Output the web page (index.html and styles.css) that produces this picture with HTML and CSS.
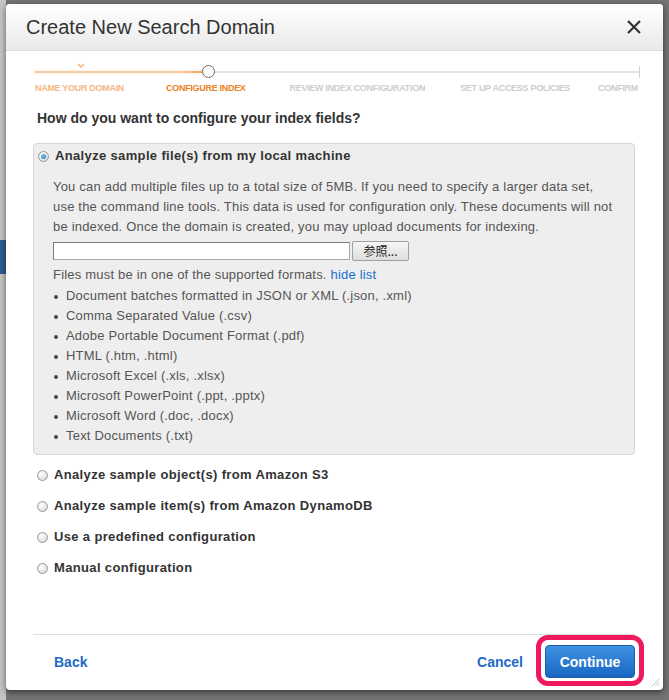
FILE: index.html
```html
<!DOCTYPE html>
<html lang="en">
<head>
    <meta charset="UTF-8">
    <title>Create New Search Domain</title>
    <link rel="stylesheet" href="styles.css">
</head>
<body>
    <div class="dialog">
        <div class="dialog-header">
            <h1>Create New Search Domain</h1>
            <svg class="close" width="14" height="14" viewBox="0 0 14 14"><path d="M1 1L13 13M13 1L1 13" stroke="#333" stroke-width="2.2"/></svg>
        </div>
        <div class="dialog-body">
            <div class="stepper">
                <div class="track">
                    <svg class="check" width="8" height="5" viewBox="0 0 8 5"><path d="M1 1L4 4L7 1" stroke="#f3ad72" stroke-width="1.4" fill="none"/></svg>
                    <div class="track-done"></div>
                    <div class="track-dot"></div>
                    <div class="track-end"></div>
                </div>
                <div class="steps">
                    <span class="step done s1">NAME YOUR DOMAIN</span>
                    <span class="step current s2">CONFIGURE INDEX</span>
                    <span class="step s3">REVIEW INDEX CONFIGURATION</span>
                    <span class="step s4">SET UP ACCESS POLICIES</span>
                    <span class="step s5">CONFIRM</span>
                </div>
            </div>

            <h2 class="question">How do you want to configure your index fields?</h2>

            <div class="panel">
                <div class="option"><span class="radio checked"></span>Analyze sample file(s) from my local machine</div>
                <p class="info">You can add multiple files up to a total size of 5MB. If you need to specify a larger data set,<br>use the command line tools. This data is used for configuration only. These documents will not<br>be indexed. Once the domain is created, you may upload documents for indexing.</p>
                <div class="file-row">
                    <div class="file-box"></div>
                    <div class="file-btn">参照...</div>
                </div>
                <p class="formats">Files must be in one of the supported formats. <a href="#">hide list</a></p>
                <ul class="format-list">
                    <li>Document batches formatted in JSON or XML (.json, .xml)</li>
                    <li>Comma Separated Value (.csv)</li>
                    <li>Adobe Portable Document Format (.pdf)</li>
                    <li>HTML (.htm, .html)</li>
                    <li>Microsoft Excel (.xls, .xlsx)</li>
                    <li>Microsoft PowerPoint (.ppt, .pptx)</li>
                    <li>Microsoft Word (.doc, .docx)</li>
                    <li>Text Documents (.txt)</li>
                </ul>
            </div>

            <div class="option outer"><span class="radio"></span>Analyze sample object(s) from Amazon S3</div>
            <div class="option outer"><span class="radio"></span>Analyze sample item(s) from Amazon DynamoDB</div>
            <div class="option outer"><span class="radio"></span>Use a predefined configuration</div>
            <div class="option outer"><span class="radio"></span>Manual configuration</div>
        </div>
        <div class="dialog-footer">
            <a href="#" class="link back">Back</a>
            <a href="#" class="link cancel">Cancel</a>
            <button class="continue">Continue</button>
        </div>
        <svg class="grip" width="9" height="9" viewBox="0 0 9 9"><path d="M8 1L1 8M8 4L4 8M8 7L7 8" stroke="#b5c4d6" stroke-width="1"/></svg>
    </div>
</body>
</html>
```

FILE: styles.css
```css
body {
    margin: 0;
    height: 700px;
    overflow: hidden;
    font-family: "Liberation Sans", Arial, sans-serif;
    background:
        linear-gradient(to bottom, transparent 240px, #2f5f93 240px, #2f5f93 274px, transparent 274px) left / 6px 100% no-repeat,
        linear-gradient(to right, #c4c4c4 6px, #747474 6px);
    padding-top: 4px;
    box-sizing: border-box;
}

.dialog {
    position: relative;
    margin-left: 6px;
    width: 657px;
    height: 686px;
    background-color: #fff;
    border-radius: 4px;
    box-shadow: 0 2px 6px rgba(0, 0, 0, 0.55);
    display: flex;
    flex-direction: column;
}

.dialog-header {
    height: 46px;
    padding: 0 22px 0 20px;
    display: flex;
    align-items: center;
    justify-content: space-between;
    background: linear-gradient(#ffffff, #e9e9e9);
    border-bottom: 1px solid #dcdcdc;
    border-radius: 4px 4px 0 0;
}

.dialog-header h1 {
    margin: 0;
    font-size: 20px;
    font-weight: normal;
    color: #333;
}

.dialog-body {
    flex: 1;
    padding: 0 28px 0 27px;
}

.stepper {
    margin: 0 -5px 0 2px;
    padding-top: 15px;
}

.track {
    position: relative;
    height: 12px;
}

.track::before {
    content: "";
    position: absolute;
    left: 0;
    right: 0;
    top: 5px;
    height: 2px;
    background-color: #e3e3e3;
}

.track-done {
    position: absolute;
    left: 0;
    top: 5px;
    width: 170px;
    height: 2px;
    background: linear-gradient(to right, #f6cfa8 0, #f6cfa8 145px, #f19a4e 170px);
    box-shadow: 0 0 3px rgba(241, 154, 78, 0.35);
}

.track-dot {
    position: absolute;
    left: 167px;
    top: -1px;
    width: 11px;
    height: 11px;
    border: 1.5px solid #6b6b6b;
    border-radius: 50%;
    background-color: #fff;
}

.track-end {
    position: absolute;
    right: 0;
    top: 0;
    width: 1px;
    height: 12px;
    background-color: #d4d4d4;
}

.check {
    position: absolute;
    left: 42px;
    top: -3px;
}

.steps {
    display: flex;
    margin-top: 4px;
    height: 12px;
}

.step {
    font-size: 9px;
    font-weight: bold;
    letter-spacing: -0.3px;
    line-height: 12px;
    color: #cdcdcd;
    white-space: nowrap;
}

.step.done {
    color: #f4b685;
}

.step.current {
    color: #e8821f;
}

.s1 { margin-left: 0; }
.s2 { margin-left: 42px; }
.s3 { margin-left: 44px; }
.s4 { margin-left: 35px; }
.s5 { margin-left: auto; margin-right: 2px; }

.question {
    margin: 14px 0 0 4px;
    font-size: 14px;
    line-height: 20px;
    color: #333;
}

.panel {
    margin-top: 15px;
    padding: 2px 8px 8px 19px;
    background-color: #eeeeee;
    border: 1px solid #d6d6d6;
    border-radius: 4px;
}

.option {
    display: flex;
    align-items: center;
    font-size: 13px;
    font-weight: bold;
    letter-spacing: 0.35px;
    line-height: 20px;
    color: #333;
}

.panel .option {
    margin-left: -15px;
}

.option.outer {
    margin-top: 11px;
    margin-left: 4px;
}

.panel + .outer {
    margin-top: 10px;
}

.radio {
    width: 9px;
    height: 9px;
    margin-right: 6px;
    border: 1px solid #9a9a9a;
    border-radius: 50%;
    background: radial-gradient(circle at 40% 35%, #fff, #d0d0d0);
    flex-shrink: 0;
    position: relative;
}

.radio.checked::after {
    content: "";
    position: absolute;
    left: 2px;
    top: 2px;
    width: 5px;
    height: 5px;
    border-radius: 50%;
    background: radial-gradient(circle at 35% 35%, #7cc3f0, #1a6fb5);
}

.info,
.formats,
.format-list li {
    font-size: 13px;
    letter-spacing: 0.2px;
    line-height: 20px;
    color: #555;
}

.info {
    margin: 11px 0 0;
    white-space: nowrap;
}

.file-row {
    display: flex;
    align-items: center;
    margin-top: 4px;
}

.file-box {
    width: 295px;
    height: 16px;
    background-color: #fff;
    border: 1px solid #a9a9a9;
    border-top-color: #7a7a7a;
    border-left-color: #7a7a7a;
}

.file-btn {
    margin-left: 2px;
    width: 55px;
    height: 18px;
    border: 1px solid #a0a0a0;
    border-radius: 2px;
    background: linear-gradient(#f6f6f6, #dedede);
    font-family: "Noto Sans CJK JP", sans-serif;
    font-size: 12px;
    line-height: 18px;
    text-align: center;
    color: #222;
}

.formats {
    margin: 4px 0 0;
}

.formats a {
    color: #1a6fcc;
    text-decoration: none;
}

.format-list {
    margin: 1px 0 0;
    padding: 0;
    list-style: none;
}

.format-list li {
    position: relative;
    padding-left: 13px;
}

.format-list li::before {
    content: "";
    position: absolute;
    left: 1px;
    top: 9px;
    width: 4px;
    height: 4px;
    border-radius: 50%;
    background-color: #444;
}

.dialog-footer {
    margin: 0 28px 0 27px;
    padding: 10px 0 12px 21px;
    border-top: 1px solid #dedede;
    display: flex;
    align-items: center;
}

.link {
    font-size: 14px;
    font-weight: bold;
    color: #1e6bc6;
    text-decoration: none;
}

.cancel {
    margin-left: auto;
    margin-right: 22px;
}

.continue {
    position: relative;
    width: 90px;
    height: 33px;
    border: 1px solid #1a5da6;
    border-radius: 4px;
    background: linear-gradient(#3f92e2, #1866c2);
    color: #fff;
    font-family: "Liberation Sans", Arial, sans-serif;
    font-size: 14px;
    font-weight: bold;
    cursor: pointer;
}

.continue::after {
    content: "";
    position: absolute;
    left: -10px;
    right: -10px;
    top: -11px;
    bottom: -9px;
    border: 5px solid #ef1a5d;
    border-radius: 12px;
}

.grip {
    position: absolute;
    right: 3px;
    bottom: 3px;
}
```
